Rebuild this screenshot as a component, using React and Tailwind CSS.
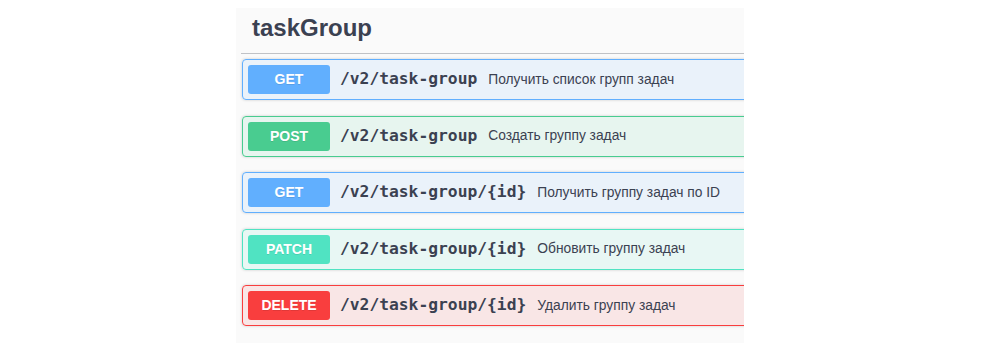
const OPS = [
  { method: 'GET', path: '/v2/task-group', desc: 'Получить список групп задач', badge: 'bg-[#61affe]', row: 'bg-[#61affe]/10 border-[#61affe]' },
  { method: 'POST', path: '/v2/task-group', desc: 'Создать группу задач', badge: 'bg-[#49cc90]', row: 'bg-[#49cc90]/10 border-[#49cc90]' },
  { method: 'GET', path: '/v2/task-group/{id}', desc: 'Получить группу задач по ID', badge: 'bg-[#61affe]', row: 'bg-[#61affe]/10 border-[#61affe]' },
  { method: 'PATCH', path: '/v2/task-group/{id}', desc: 'Обновить группу задач', badge: 'bg-[#50e3c2]', row: 'bg-[#50e3c2]/10 border-[#50e3c2]' },
  { method: 'DELETE', path: '/v2/task-group/{id}', desc: 'Удалить группу задач', badge: 'bg-[#f93e3e]', row: 'bg-[#f93e3e]/10 border-[#f93e3e]' },
]

function OpRow({ op }) {
  return (
    <div className={`flex items-center h-[41px] w-[560px] shrink-0 px-[5px] border rounded-[4px] shadow-[0_0_3px_rgba(0,0,0,0.19)] ${op.row}`}>
      <span
        className={`w-[82px] h-[29px] rounded-[3px] flex items-center justify-center text-white text-[14px] font-bold [text-shadow:0_1px_0_rgba(0,0,0,0.1)] ${op.badge}`}
      >
        {op.method}
      </span>
      <span className="pl-[10px] pr-[11px] text-[16.3px] font-bold text-[#3b4151] font-['DejaVu_Sans_Mono',monospace] leading-none">
        {op.path}
      </span>
      <span className="text-[13.8px] text-[#3b4151] leading-none">{op.desc}</span>
    </div>
  )
}

export default function App() {
  return (
    <div className="w-[981px] h-[351px] bg-white font-['Liberation_Sans',Arial,sans-serif]">
      <div className="ml-[236px] pt-[8px]">
        <div className="w-[508px] h-[335px] bg-[#fafafa] overflow-hidden">
          <div className="pl-[16px] pt-[4px] pb-[9px]">
            <h2 className="text-[24px] leading-[32px] font-bold text-[#3b4151]">taskGroup</h2>
          </div>
          <div className="ml-[5px] border-t border-[#3b4151]/30" />
          <div className="pl-[6px] pt-[5px] flex flex-col gap-[15.5px]">
            {OPS.map((op, i) => (
              <OpRow key={i} op={op} />
            ))}
          </div>
        </div>
      </div>
    </div>
  )
}
